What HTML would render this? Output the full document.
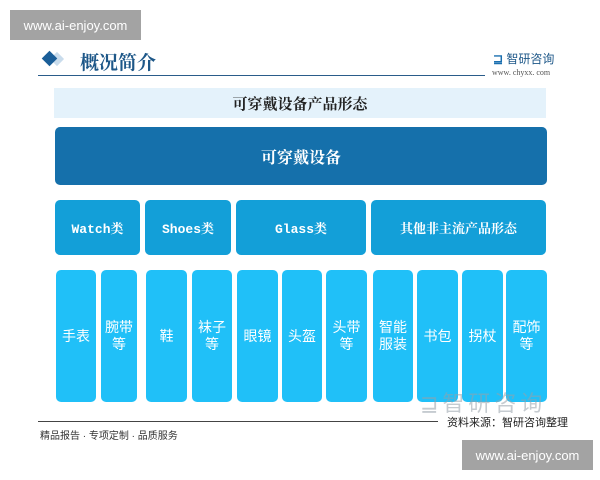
<!DOCTYPE html>
<html><head><meta charset="utf-8"><style>
*{margin:0;padding:0;box-sizing:border-box}
body{width:600px;height:480px;background:#fff;position:relative;overflow:hidden;font-family:"Liberation Sans","Noto Sans CJK SC",sans-serif}
.a{position:absolute}
.wm{background:#a3a3a3;color:#fff;font-size:13px;display:flex;align-items:center;justify-content:center}
.cat{background:#139fd8;border-radius:5px;color:#fff;font-family:"Liberation Mono","Noto Serif CJK SC",serif;font-weight:bold;font-size:13px;display:flex;align-items:center;justify-content:center;top:200px;height:55px}
.cell{background:#20c0f8;border-radius:5px;color:#fff;font-size:14px;display:flex;align-items:center;justify-content:center;text-align:center;line-height:17px;top:270px;height:132px}
</style></head><body>
<div class="a wm" style="left:10px;top:10px;width:131px;height:30px">www.ai-enjoy.com</div>
<div class="a" style="left:52px;top:54px;width:10px;height:10px;background:#c9dcec;transform:rotate(45deg)"></div>
<div class="a" style="left:44px;top:53px;width:11px;height:11px;background:#1a5e98;transform:rotate(45deg)"></div>
<div class="a" style="left:80px;top:48px;font-family:'Noto Serif CJK SC',serif;font-weight:bold;font-size:19px;color:#1d5788">概况简介</div>
<div class="a" style="left:38px;top:75px;width:447px;height:1px;background:#2a5c8a"></div>
<div class="a" style="left:493px;top:50px;font-size:12px;color:#1d5788"><b style="color:#1a6fb0">⊒</b> 智研咨询</div>
<div class="a" style="left:492px;top:68px;font-size:8px;color:#555;font-family:'Liberation Serif',serif">www. chyxx. com</div>
<div class="a" style="left:54px;top:88px;width:492px;height:30px;background:#e4f2fb;display:flex;align-items:center;justify-content:center;font-family:'Noto Serif CJK SC',serif;font-weight:bold;font-size:15px;color:#222">可穿戴设备产品形态</div>
<div class="a" style="left:55px;top:127px;width:492px;height:58px;background:#1570ab;border-radius:5px;display:flex;align-items:center;justify-content:center;font-family:'Noto Serif CJK SC',serif;font-weight:bold;font-size:16px;color:#fff">可穿戴设备</div>
<div class="a cat" style="left:55px;width:85px">Watch类</div>
<div class="a cat" style="left:145px;width:86px">Shoes类</div>
<div class="a cat" style="left:236px;width:130px">Glass类</div>
<div class="a cat" style="left:371px;width:175px">其他非主流产品形态</div>
<div class="a cell" style="left:56px;width:40px">手表</div>
<div class="a cell" style="left:101px;width:36px">腕带<br>等</div>
<div class="a cell" style="left:146px;width:41px">鞋</div>
<div class="a cell" style="left:192px;width:40px">袜子<br>等</div>
<div class="a cell" style="left:237px;width:41px">眼镜</div>
<div class="a cell" style="left:282px;width:40px">头盔</div>
<div class="a cell" style="left:326px;width:41px">头带<br>等</div>
<div class="a cell" style="left:373px;width:40px">智能<br>服装</div>
<div class="a cell" style="left:417px;width:41px">书包</div>
<div class="a cell" style="left:462px;width:41px">拐杖</div>
<div class="a cell" style="left:506px;width:41px">配饰<br>等</div>
<div class="a" style="left:420px;top:386px;font-size:22px;color:rgba(150,160,170,0.55);letter-spacing:4px">⊒智研咨询</div>
<div class="a" style="left:38px;top:421px;width:400px;height:1px;background:#444"></div>
<div class="a" style="left:447px;top:414px;font-size:11px;color:#222">资料来源：智研咨询整理</div>
<div class="a" style="left:40px;top:427px;font-size:10px;color:#333">精品报告 · 专项定制 · 品质服务</div>
<div class="a wm" style="left:462px;top:440px;width:131px;height:30px">www.ai-enjoy.com</div>
</body></html>
